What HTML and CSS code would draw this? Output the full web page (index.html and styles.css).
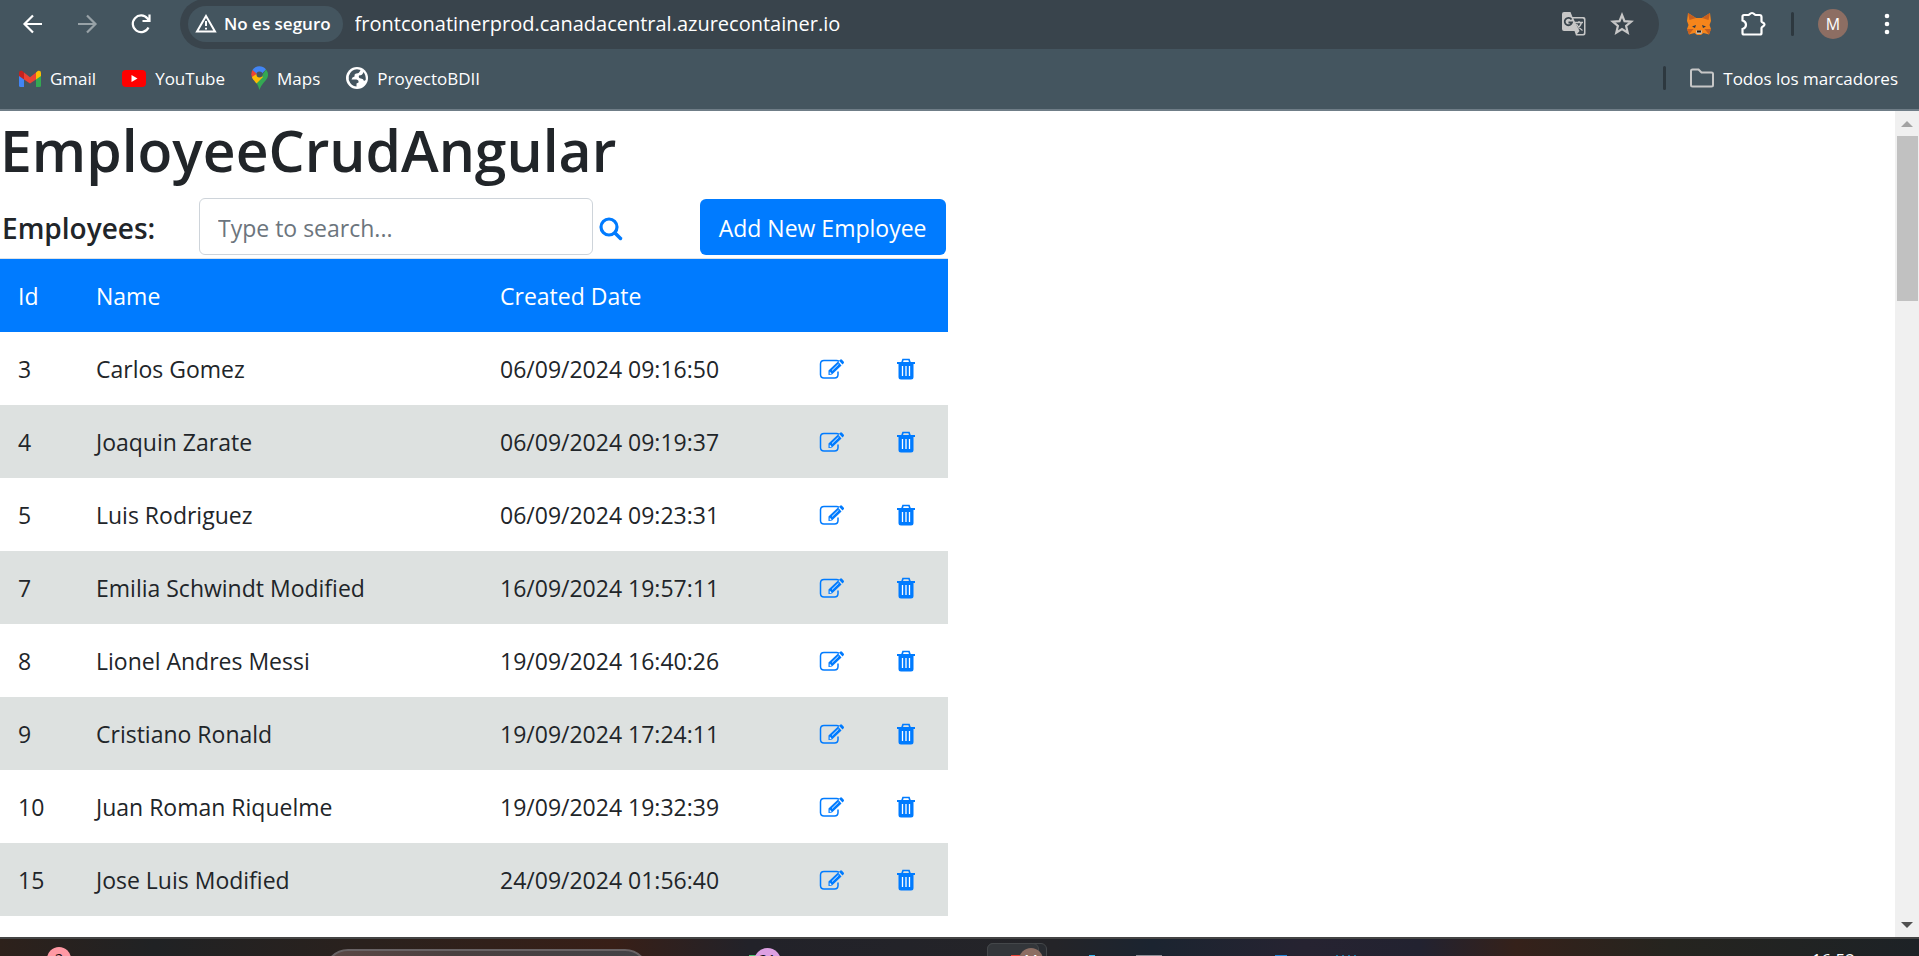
FILE: index.html
```
<!DOCTYPE html>
<html lang="es">
<head>
<meta charset="utf-8">
<title>EmployeeCrudAngular</title>
<link rel="stylesheet" href="styles.css">
</head>
<body>
<svg class="sprite" aria-hidden="true">
  <symbol id="edit" viewBox="0 0 26 21"><path d="M20 2.300 Q19 1.500 17.500 1.500 H5 Q1.500 1.500 1.500 5 V15.500 Q1.500 19 5 19 H15.500 Q19 19 19 15.500 V12.500" fill="none" stroke="currentColor" stroke-width="1.500"/><path d="M9.500 11.500 19 2.500 22.500 6.500 13 15.500 9.500 16Z"/><path d="M20 1.700 21.500.5Q22.300 0 23 .8L24.800 2.800Q25.300 3.500 24.700 4.200L23.500 5.500Z"/><path d="M13 11.500 19.500 5.200" stroke="#fff" stroke-width=".9"/><path d="M10.800 12.500 12.700 14.700 10.700 15Z" fill="#fff"/></symbol>
  <symbol id="trash" viewBox="0 0 20 22"><path d="M1 4H19V6H17.500V19Q17.500 21.500 15 21.500H5Q2.500 21.500 2.500 19V6H1Z"/><path d="M6 4.500 7 1.500H13L14 4.500" fill="none" stroke="currentColor" stroke-width="1.700"/><path d="M6.500 8V18M10 8V18M13.500 8V18" stroke="#fff" stroke-width="1.300"/></symbol>
</svg>
<div class="screen">
  <header class="browser">
    <div class="toolbar">
      <nav class="nav">
        <button aria-label="Atrás"><svg width="22" height="22" viewBox="0 0 22 22"><path d="M20 11H3M11 2.500 2.500 11 11 19.500"/></svg></button>
        <button class="dim" aria-label="Adelante"><svg width="22" height="22" viewBox="0 0 22 22"><path d="M2 11H19M11 2.500 19.500 11 11 19.500"/></svg></button>
        <button aria-label="Recargar"><svg width="22" height="22" viewBox="0 0 22 22"><path d="M18.500 14.500A8.300 8.300 0 1 1 17.500 5.500L19 7.500M19.500 1.500V8H12.500"/></svg></button>
      </nav>
      <div class="omnibox">
        <button class="security"><svg width="22" height="19" viewBox="0 0 22 19"><path d="M11 2 20 17.500H2Z"/><path d="M11 7V12M11 13.700V15.500"/></svg>No es seguro</button>
        <input class="url" aria-label="Dirección" value="frontconatinerprod.canadacentral.azurecontainer.io">
        <button class="pale" aria-label="Traducir"><svg width="26" height="26" viewBox="0 0 26 26"><path d="M3 1H9.500L11.500 6H22.500Q24.500 6 24.500 8V22.500Q24.500 24.500 22.500 24.500H15L13.500 20H3Q1 20 1 18V3Q1 1 3 1Z" fill="#c7c7c7" stroke="none"/><path d="M12.300 7.500H21.500Q23 7.500 23 9V21.500Q23 23 21.500 23H16L18.500 20Z" fill="#39444c" stroke="none"/><path d="M10.500 8.500A3.700 3.700 0 1 0 11 11.500H7.500" stroke="#39444c" stroke-width="1.800"/><path d="M14 11.500H22M18 10V11.500M20.500 11.500Q19.500 15.500 15.500 18M15.500 13Q17.500 17 21.500 19.500" stroke-width="1.300"/></svg></button>
        <button class="pale" aria-label="Marcador"><svg width="24" height="24" viewBox="0 0 24 24"><path d="M12 3 14.500 9.200 21.200 9.700 16.100 14 17.700 20.700 12 17.100 6.300 20.700 7.900 14 2.800 9.700 9.500 9.200Z"/></svg></button>
      </div>
      <div class="extensions">
        <button aria-label="MetaMask"><svg width="26" height="24" viewBox="0 0 26 24"><path d="M2 1 10 6H16L24 1 25 9 23.500 13 25 17 23 22.500 17.500 21 15 23H11L8.500 21 3 22.500 1 17 2.500 13 1 9Z" fill="#f6851b" stroke="none"/><path d="M2 1 10 6 3.500 8ZM24 1 16 6 22.500 8ZM1 17 7.500 17 3 22.500ZM25 17H18.500L23 22.500Z" fill="#c65f20" stroke="none"/><path d="M10 13 9 16 6 14.500ZM16 13 17 16 20 14.500Z" fill="#2b3746" stroke="none"/><path d="M10 18.500H16L15.500 22H10.500Z" fill="#c9bfb4" stroke="none"/><path d="M11 18.500H15V20.500H11Z" fill="#222" stroke="none"/></svg></button>
        <button aria-label="Extensiones"><svg width="26" height="26" viewBox="0 0 26 26"><path d="M4 4H8.500C9.500 4 9.800 2 12 2S14.500 4 15.500 4H19.500Q21.500 4 21.500 6V10.500C21.500 11.500 24.500 11.500 24.500 13.500S21.500 15.500 21.500 17V22Q21.500 23.500 20 23.500H4Q2.500 23.500 2.500 22V18Q6 17 6 13.800T2.500 9.500V5.500Q2.500 4 4 4Z"/></svg></button>
        <i class="divider"></i>
        <button class="avatar" aria-label="Perfil">M</button>
        <button aria-label="Menú"><svg width="6" height="22" viewBox="0 0 6 22"><g fill="#fff" stroke="none"><circle cx="3" cy="3" r="2.300"/><circle cx="3" cy="11" r="2.300"/><circle cx="3" cy="19" r="2.300"/></g></svg></button>
      </div>
    </div>
    <nav class="bookmarks">
      <a href="#"><svg width="22" height="17" viewBox="0 0 22 17"><path d="M0 3H5V17H1.500Q0 17 0 15.500Z" fill="#4285f4"/><path d="M17 3H22V15.500Q22 17 20.500 17H17Z" fill="#34a853"/><path d="M17 2.500 19 .8Q22 0 22 3V6L17 9.500Z" fill="#fbbc04"/><path d="M5 2.500 3 .8Q0 0 0 3V6L5 9.500Z" fill="#c5221f"/><path d="M5 2.500 11 7.300 17 2.500V9.500L11 13.500 5 9.500Z" fill="#ea4335"/></svg>Gmail</a>
      <a href="#"><svg width="24" height="17" viewBox="0 0 24 17"><rect width="24" height="17" rx="4" fill="#f00"/><path d="M9.500 5V12L15.500 8.500Z" fill="#fff"/></svg>YouTube</a>
      <a href="#"><svg width="17" height="24" viewBox="0 0 17 24"><path d="M1.500 4A8.500 8.500 0 0 0 2 13L8.500 8.500Z" fill="#ea4335"/><path d="M1.500 4A8.300 8.300 0 0 1 15 3.500L8.500 10Z" fill="#4285f4"/><path d="M15 3.500A8.500 8.500 0 0 1 15 14Q9.500 20 8.500 24 7.500 20 5.500 17Z" fill="#34a853"/><path d="M1 11 7 7 12 11 5.500 17.500Q1 12.500 1 11Z" fill="#fbbc04"/><circle cx="8.500" cy="8.500" r="3" fill="#44555f"/></svg>Maps</a>
      <a href="#"><svg width="22" height="22" viewBox="0 0 22 22"><circle cx="11" cy="11" r="11" fill="#fff"/><path d="M14.500 3Q13 7 10 6.500 8 7 8.500 9.500 6 10 5.500 12.500H10.500Q13 13 12.500 15.500L10.500 16.500V19.500Q5 19 2.800 13V9Q5 2.500 11 2.300Z" fill="#44555f"/><path d="M17.500 5Q20 8 19.700 13L18 14Q17.500 11.500 15 11.500 12 11 13 8.500Q16.500 8.500 17.500 5Z" fill="#44555f"/></svg>ProyectoBDII</a>
      <span class="all"><i class="divider"></i><a href="#"><svg width="24" height="20" viewBox="0 0 24 20"><path d="M2.500 1.500H8.500L11.500 4.500H21.500Q23 4.500 23 6V17Q23 18.500 21.500 18.500H2.500Q1 18.500 1 17V3Q1 1.500 2.500 1.500Z" fill="none" stroke="#c7c7c7" stroke-width="2"/></svg>Todos los marcadores</a></span>
    </nav>
  </header>
  <main class="viewport">
    <div class="page">
      <h1>EmployeeCrudAngular</h1>
      <div class="app">
        <div class="controls">
          <label for="search">Employees:</label>
          <input id="search" class="search" placeholder="Type to search...">
          <button class="find" aria-label="Search"><svg width="24" height="24" viewBox="0 0 24 24"><circle cx="10" cy="10" r="8" fill="none" stroke="currentColor" stroke-width="3.200"/><path d="M16 16 21.500 21.500" stroke="currentColor" stroke-width="3.500" stroke-linecap="round"/></svg></button>
          <button class="add">Add New Employee</button>
        </div>
        <table>
          <colgroup><col class="c-id"><col class="c-name"><col class="c-date"><col class="c-edit"><col class="c-del"></colgroup>
          <thead><tr><th>Id</th><th>Name</th><th>Created Date</th><th></th><th></th></tr></thead>
          <tbody id="rows"></tbody>
        </table>
      </div>
    </div>
    <div class="scrollbar"><i class="up"></i><i class="thumb"></i><i class="down"></i></div>
  </main>
  <footer class="taskbar">
    <span class="badge pink">2</span>
    <span class="tasksearch"></span>
    <span class="strip green"></span>
    <span class="badge lilac">21</span>
    <span class="task back"></span><span class="task"></span>
    <span class="strip red"></span>
    <span class="badge brown">M</span>
    <span class="strip cyan"></span><span class="strip gray"></span><span class="strip blue"></span><span class="strip dots"></span>
    <span class="clock">16:52</span>
  </footer>
</div>
<script src="app.js"></script>
</body>
</html>
```
FILE: styles.css
```
* { box-sizing: border-box; }
body { margin: 0; font-family: "Open Sans", "Noto Sans", sans-serif; color: #212529; background: #fff; }
button { border: 0; background: none; padding: 0; font: inherit; color: inherit; display: flex; align-items: center; }
a { color: inherit; text-decoration: none; }
.sprite { display: none; }
.screen { height: 100vh; display: flex; flex-direction: column; overflow: hidden; }

.browser { background: #44555f; color: #fff; border-bottom: 2px solid #6f7d87; flex: none; }
.toolbar { display: flex; align-items: center; height: 49px; padding-bottom: 1px; }
.toolbar svg { fill: none; stroke: #fff; stroke-width: 2.200; }
.nav { display: flex; gap: 32px; padding-left: 22px; width: 180px; }
.nav .dim { opacity: .45; }
.omnibox { flex: 1; height: 50px; background: #39444c; border-radius: 25px; display: flex; align-items: center; padding: 0 25px 1px 8px; }
.security { height: 36px; background: #44555f; border-radius: 18px; padding: 0 12px 1px 7px; gap: 7px; font-size: 17px; font-weight: 600; white-space: nowrap; }
.toolbar .security svg { stroke-width: 2; }
.url { flex: 1; min-width: 0; border: 0; outline: 0; background: none; color: #fff; font: 20px "Open Sans", sans-serif; padding: 0 0 1px 12px; }
.toolbar .pale svg { stroke: #c7c7c7; }
.pale + .pale { margin-left: 23px; }
.extensions { display: flex; align-items: center; padding: 0 29px 0 27px; }
.extensions > * + * { margin-left: 28px; }
.divider { width: 3px; height: 24px; border-radius: 2px; background: #2d383f; }
.extensions .divider { margin-left: 25px; }
.extensions .avatar { width: 30px; height: 30px; border-radius: 50%; background: #8d6e63; justify-content: center; font-size: 16px; margin-left: 24px; }
.extensions .avatar + button { margin-left: 36px; }
.bookmarks { height: 60px; display: flex; align-items: center; padding: 0 21px 2px 19px; gap: 26px; font-size: 17px; }
.bookmarks a { display: flex; align-items: center; gap: 9px; }
.all { margin-left: auto; display: flex; align-items: center; gap: 24px; }

.viewport { flex: 1; min-height: 0; display: flex; }
.page { flex: 1; overflow: hidden; }
h1 { margin: 0; padding-left: 0; font-size: 57px; line-height: 72px; font-weight: 600; padding-top: 3px; }
.app { width: 50%; max-width: 948px; font-size: 23px; }
.controls { display: flex; align-items: center; padding: 12px 2px 3px; }
.controls label { width: 197px; font-size: 28px; font-weight: 600; padding-top: 2px; }
.search { width: 394px; height: 57px; border: 1px solid #ced4da; border-radius: 6px; padding: 2px 18px 0; font: 23px "Open Sans", sans-serif; color: #495057; }
.search::placeholder { color: #6c757d; opacity: 1; }
.find { color: #007bff; margin-left: 6px; padding-top: 4px; }
.add { margin-left: auto; height: 56px; padding: 2px 19px 0; background: #007bff; color: #fff; border-radius: 6px; white-space: nowrap; }
table { width: 100%; border-collapse: collapse; table-layout: fixed; border-top: 1px solid #dee2e6; }
.c-id { width: 78px; }
.c-name { width: 404px; }
.c-date { width: 319px; }
.c-edit { width: 77px; }
th, td { height: 73px; padding: 2px 18px 0; text-align: left; font-weight: 400; white-space: nowrap; }
th { background: #007bff; color: #fff; }
tbody tr:nth-child(even) { background: #dde1e0; }
td svg { display: block; fill: currentColor; }
td button { color: #007bff; }
.scrollbar { width: 24px; background: #f0f0f0; display: flex; flex-direction: column; align-items: center; padding: 10px 0 9px; }
.up, .down { border: 6px solid transparent; }
.up { border-top: 0; border-bottom-color: #a3a3a3; }
.down { border-bottom: 0; border-top-color: #505050; margin-top: auto; }
.thumb { width: 21px; height: 165px; background: #c1c1c1; margin-top: 9px; }

.taskbar { flex: none; height: 19px; position: relative; overflow: hidden; border-top: 2px solid #444; color: #fff;
  background: linear-gradient(90deg, #2d211b, #202224 8%, #2a211d 19%, #381f17 32%, #222229 39%, #242428 55%, #1b2430 60%, #262331 68%, #222230 74%, #35211a 79%, #25241f 87%, #1d2226); }
.taskbar span { position: absolute; }
.badge { width: 24px; height: 24px; border-radius: 50%; text-align: center; font-size: 15px; line-height: 22px; color: #111; top: 8px; }
.pink { left: 47px; background: #ff99a4; }
.lilac { left: 754px; width: 27px; height: 27px; background: #dda0e2; top: 9px; }
.brown { left: 1019px; background: #8d6e63; color: #fff; top: 9px; }
.tasksearch { left: 324px; width: 325px; height: 50px; top: 10px; border: 2px solid #696365; border-radius: 24px; background: linear-gradient(90deg, #5b4845, #4a4040 40%, #424246); }
.task { left: 987px; top: 4px; width: 52px; height: 30px; border: 1px solid #44474a; border-radius: 6px; background: #33363a; }
.back { width: 60px; background: #292c31; }
.strip { height: 2px; top: 16px; }
.green { left: 749px; width: 8px; background: #4cc774; }
.red { left: 1011px; width: 9px; background: #ea4335; }
.cyan { left: 1089px; width: 6px; background: #35b8f1; }
.gray { left: 1136px; width: 26px; background: #8e8e96; }
.blue { left: 1275px; width: 12px; background: #2187d9; }
.dots { left: 1336px; width: 23px; background: repeating-linear-gradient(90deg, #1679a5 0 2px, transparent 2px 6px); }
.clock { right: 64px; top: 9px; font-size: 17px; line-height: 24px; }
```
FILE: app.js
```
const employees = [
  [3, "Carlos Gomez", "06/09/2024 09:16:50"],
  [4, "Joaquin Zarate", "06/09/2024 09:19:37"],
  [5, "Luis Rodriguez", "06/09/2024 09:23:31"],
  [7, "Emilia Schwindt Modified", "16/09/2024 19:57:11"],
  [8, "Lionel Andres Messi", "19/09/2024 16:40:26"],
  [9, "Cristiano Ronald", "19/09/2024 17:24:11"],
  [10, "Juan Roman Riquelme", "19/09/2024 19:32:39"],
  [15, "Jose Luis Modified", "24/09/2024 01:56:40"]
];
document.getElementById("rows").innerHTML = employees.map(([id, name, date]) => `
  <tr><td>${id}</td><td>${name}</td><td>${date}</td>
  <td><button aria-label="Edit ${name}"><svg width="26" height="21"><use href="#edit"/></svg></button></td>
  <td><button aria-label="Delete ${name}"><svg width="20" height="22"><use href="#trash"/></svg></button></td></tr>`).join("");
```
